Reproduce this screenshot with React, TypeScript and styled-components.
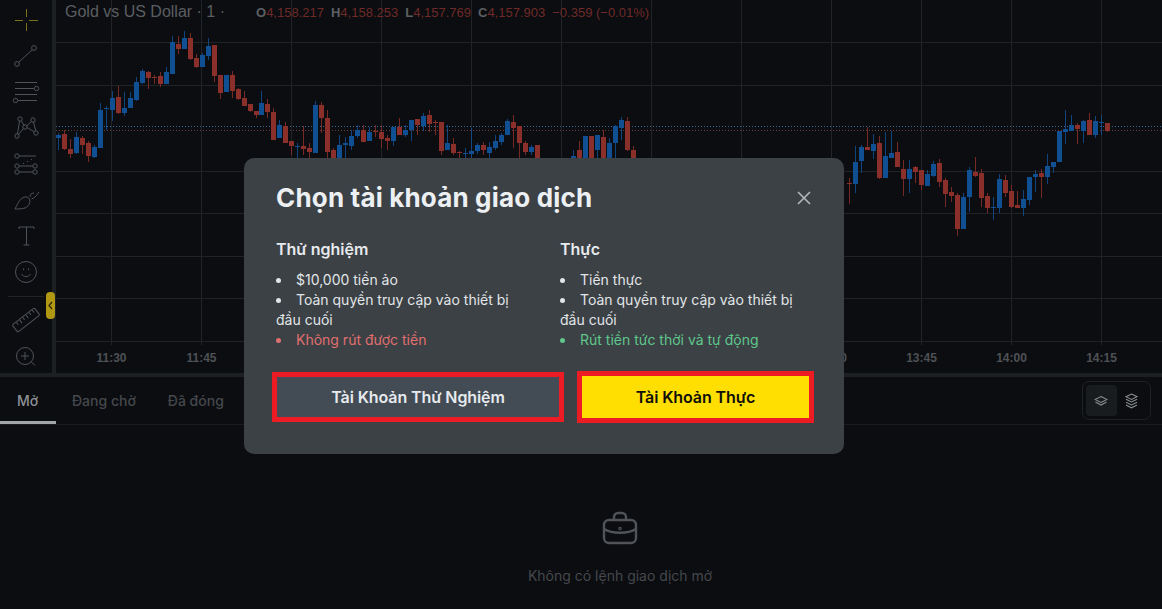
import React from "react";
import styled, { createGlobalStyle } from "styled-components";

const Global = createGlobalStyle`
  html, body { margin: 0; padding: 0; background: #0b0d11; }
  * { box-sizing: border-box; }
`;

const Page = styled.div`
  position: relative;
  width: 1162px;
  height: 609px;
  overflow: hidden;
  display: flex;
  flex-direction: column;
  background: #0b0d11;
  font-family: Inter, "Noto Sans", sans-serif;
`;
const TopRow = styled.div`
  display: flex;
  height: 373px;
  flex: none;
`;
const Toolbar = styled.div`
  position: relative;
  width: 52px;
  flex: none;
  padding-top: 2px;
  display: flex;
  flex-direction: column;
  align-items: center;
`;
const ToolSlot = styled.div<{ $gold?: boolean }>`
  width: 36px;
  height: 36px;
  flex: none;
  svg { display: block; fill: none; stroke: ${(p) => (p.$gold ? "#7e6f1a" : "#4f5357")}; stroke-width: 1; }
`;
const ToolDivider = styled.div`
  width: 36px;
  height: 1px;
  margin: 6px 0 5px;
  background: #202327;
  flex: none;
`;
const CollapsePill = styled.div`
  position: absolute;
  left: 46px;
  top: 292px;
  width: 9px;
  height: 27px;
  border-radius: 4px;
  background: #b19812;
  z-index: 2;
  display: flex;
  align-items: center;
  justify-content: center;
  svg { display: block; }
`;
const VSep = styled.div`
  width: 4px;
  flex: none;
  background: #1d2023;
`;
const ChartArea = styled.div`
  position: relative;
  flex: 1;
  min-width: 0;
  svg { display: block; }
`;
const AxisLabel = styled.text`
  font-family: "Liberation Sans", Arial, sans-serif;
  font-size: 12px;
  font-weight: 700;
  fill: #4e5155;
  text-anchor: middle;
`;
const Legend = styled.div`
  position: absolute;
  left: 9px;
  top: 3px;
  display: flex;
  align-items: center;
  height: 18px;
  font-family: "Liberation Sans", Arial, sans-serif;
  white-space: nowrap;
`;
const LegendTitle = styled.span`
  width: 191px;
  font-size: 16px;
  color: #5b5e61;
`;
const LegendItem = styled.span`
  font-size: 13px;
  color: #6f2a27;
  margin-right: 7px;
  b { color: #5c5f62; font-weight: 700; }
`;
const HSep = styled.div`
  height: 4px;
  flex: none;
  background: #1d2023;
`;
const Panel = styled.div`
  flex: 1;
  display: flex;
  flex-direction: column;
`;
const TabRow = styled.div`
  height: 48px;
  flex: none;
  display: flex;
  align-items: stretch;
  justify-content: space-between;
  padding-right: 11px;
  border-bottom: 1px solid #1a1d20;
`;
const Tabs = styled.div`
  display: flex;
`;
const Tab = styled.div<{ $active?: boolean }>`
  padding: 2px 16px 0 ${(p) => (p.$active ? "17px" : "16px")};
  width: ${(p) => (p.$active ? "56px" : "auto")};
  display: flex;
  align-items: center;
  font-size: 14px;
  font-weight: 500;
  color: ${(p) => (p.$active ? "#8d9196" : "#45484c")};
  border-bottom: 3px solid ${(p) => (p.$active ? "#a3a6a9" : "transparent")};
`;
const Toggle = styled.div`
  align-self: flex-start;
  margin-top: 4px;
  width: 69px;
  height: 39px;
  padding: 3px;
  display: flex;
  border: 1px solid #1e2125;
  border-radius: 7px;
`;
const ToggleCell = styled.div<{ $on?: boolean }>`
  flex: 1;
  display: flex;
  align-items: center;
  justify-content: center;
  border-radius: 4px;
  background: ${(p) => (p.$on ? "#191c1f" : "transparent")};
  svg { display: block; fill: none; stroke: #8a8d90; stroke-width: 1.1; }
`;
const Empty = styled.div`
  flex: 1;
  display: flex;
  flex-direction: column;
  align-items: center;
  padding: 86px 0 0 78px;
  gap: 22px;
  svg { display: block; fill: none; stroke: #505357; stroke-width: 2.4; }
`;
const EmptyText = styled.div`
  font-size: 14px;
  color: #45484c;
`;

const Modal = styled.div`
  position: absolute;
  left: 244px;
  top: 158px;
  width: 600px;
  height: 296px;
  background: #3b4145;
  border-radius: 10px;
  padding: 24px 32px 20px;
  z-index: 5;
  display: flex;
  flex-direction: column;
`;
const ModalHead = styled.div`
  display: flex;
  align-items: center;
  justify-content: space-between;
`;
const Title = styled.h2`
  margin: 0;
  font-size: 26px;
  line-height: 32px;
  font-weight: 700;
  letter-spacing: 0.17px;
  color: #edf0f3;
`;
const Close = styled.div`
  width: 16px;
  height: 16px;
  svg { display: block; stroke: #b1b5b8; stroke-width: 1.7; fill: none; }
`;
const Columns = styled.div`
  display: grid;
  grid-template-columns: 252px 252px;
  column-gap: 32px;
  margin-top: 23px;
`;
const ColHead = styled.h3`
  margin: 0 0 9px;
  font-size: 16px;
  line-height: 24px;
  font-weight: 600;
  color: #e7eaed;
`;
const List = styled.ul`
  margin: 0;
  padding: 0;
  list-style: none;
`;
const Item = styled.li<{ $tone?: "red" | "green" }>`
  font-size: 14px;
  line-height: 20px;
  color: ${(p) => (p.$tone === "red" ? "#e06f70" : p.$tone === "green" ? "#5fc78c" : "#e2e5e8")};
  &::before {
    content: "";
    display: inline-block;
    width: 5px;
    height: 5px;
    border-radius: 50%;
    background: currentColor;
    margin-right: 15px;
    vertical-align: 2px;
  }
`;
const Actions = styled.div`
  display: flex;
  align-items: center;
  gap: 13px;
  margin: 21px -2px 0 -4px;
`;
const ActionBtn = styled.button<{ $primary?: boolean }>`
  flex: none;
  width: ${(p) => (p.$primary ? "237px" : "292px")};
  height: ${(p) => (p.$primary ? "52px" : "50px")};
  border: 5px solid #ed1c24;
  border-radius: 0;
  background: ${(p) => (p.$primary ? "#ffde02" : "#434c54")};
  color: ${(p) => (p.$primary ? "#0f0f0a" : "#e6eaee")};
  font-family: Inter, "Noto Sans", sans-serif;
  font-size: 16px;
  letter-spacing: -0.1px;
  font-weight: 600;
  padding: 0;
`;

type C = [number, number, number, number, number, "b" | "r"];
const candles: C[] = [
  [58,135,138,133,150,"b"],[64,134,149,130,150,"r"],[70,149,154,139,158,"r"],[76,137,153,132,154,"b"],[82,138,145,136,154,"r"],
  [88,143,156,141,162,"r"],[94,147,157,145,158,"b"],[100,110,148,103,148,"b"],[106,108,109,106,130,"b"],[112,98,110,91,121,"b"],
  [118,97,113,86,114,"r"],[124,108,113,92,116,"b"],[130,98,108,92,108,"b"],[136,82,100,77,101,"b"],[142,71,83,69,84,"b"],
  [148,72,78,71,89,"r"],[154,77,78,75,84,"r"],[160,76,84,72,87,"r"],[166,72,84,67,84,"b"],[172,42,74,36,74,"b"],
  [178,44,49,36,54,"r"],[184,38,49,31,49,"b"],[190,38,59,33,60,"r"],[196,58,67,54,68,"r"],[202,55,67,53,67,"b"],
  [208,46,56,38,60,"b"],[214,45,76,45,82,"r"],[220,75,93,75,99,"r"],[226,75,92,75,92,"b"],[232,75,91,71,98,"r"],
  [238,89,99,88,100,"r"],[244,98,106,91,106,"r"],[250,104,111,104,112,"r"],[256,111,115,111,118,"r"],[261,103,115,91,115,"b"],
  [267,104,112,99,118,"r"],[273,112,140,108,140,"r"],[279,125,138,120,138,"b"],[285,126,143,122,143,"r"],[291,141,146,141,155,"r"],
  [297,146,147,143,160,"b"],[303,146,149,126,155,"r"],[309,148,152,143,158,"r"],[315,105,153,101,153,"b"],[321,105,118,102,133,"r"],
  [327,118,152,110,158,"r"],[333,150,158,148,160,"r"],[339,145,158,135,160,"b"],[345,143,145,137,158,"b"],[351,136,146,130,150,"b"],
  [357,130,136,125,138,"b"],[363,130,142,125,142,"r"],[369,132,141,127,141,"b"],[375,131,132,125,137,"r"],[381,132,139,125,148,"r"],
  [387,138,141,135,150,"r"],[393,127,141,127,146,"b"],[399,127,135,118,135,"r"],[405,130,135,125,137,"b"],[411,120,130,120,141,"b"],
  [417,119,125,119,135,"r"],[423,116,126,113,131,"b"],[429,115,124,110,132,"r"],[435,122,123,120,135,"r"],[441,122,151,122,155,"r"],
  [447,143,150,125,150,"b"],[453,144,153,138,155,"r"],[459,152,153,151,158,"r"],[465,153,154,148,158,"b"],[471,151,154,128,158,"b"],
  [477,145,151,143,154,"b"],[483,145,150,142,155,"r"],[489,147,153,142,158,"b"],[495,141,148,135,150,"b"],[501,135,142,133,145,"b"],
  [507,121,135,119,135,"b"],[513,122,128,115,148,"r"],[519,126,143,126,158,"r"],[525,143,152,141,155,"r"],[531,147,152,145,155,"b"],
  [537,145,158,145,160,"r"],[573,156,160,150,160,"b"],[579,150,160,141,160,"r"],[585,136,160,136,160,"b"],[591,136,160,136,160,"r"],
  [597,135,150,135,160,"b"],[603,137,160,130,160,"r"],[609,143,160,138,160,"b"],[615,126,143,125,160,"b"],[621,120,128,117,140,"b"],
  [627,121,150,117,151,"r"],[633,150,160,146,160,"r"],
  [849,183,184,178,204,"r"],[855,162,184,146,193,"b"],[861,147,161,145,173,"b"],[867,147,150,127,150,"r"],[873,144,151,134,159,"b"],
  [879,143,178,136,179,"r"],[885,156,178,132,178,"b"],[891,153,158,131,158,"b"],[897,152,167,142,167,"r"],[903,169,179,160,196,"r"],
  [909,169,179,160,193,"b"],[915,167,172,166,183,"r"],[921,170,185,170,190,"r"],[927,174,186,170,186,"b"],[933,164,176,161,177,"b"],
  [939,163,182,159,187,"r"],[945,180,194,178,207,"r"],[951,192,196,187,202,"r"],[957,195,229,193,236,"r"],[963,197,229,193,229,"b"],
  [969,170,197,167,212,"b"],[975,172,176,157,177,"r"],[981,173,198,169,207,"r"],[987,196,208,193,213,"r"],[993,207,208,197,220,"b"],
  [999,179,208,174,213,"b"],[1005,180,193,175,197,"r"],[1011,191,207,185,208,"r"],[1017,205,208,191,208,"r"],[1023,199,208,190,216,"b"],
  [1029,177,200,177,205,"b"],[1035,174,177,170,192,"b"],[1041,173,177,169,198,"r"],[1047,166,177,154,184,"b"],[1053,162,167,162,173,"b"],
  [1059,131,162,131,162,"b"],[1065,129,132,110,144,"b"],[1071,125,131,115,131,"b"],[1077,125,129,123,144,"r"],[1083,121,131,120,143,"b"],
  [1089,120,135,113,135,"r"],[1095,121,135,116,138,"b"],[1101,122,123,115,135,"b"],[1107,123,131,123,132,"r"],
];
const vGrid = [111, 201, 291, 381, 471, 561, 651, 741, 831, 921, 1011, 1101];
const hGrid = [42, 85, 171, 213, 256, 298, 341];
const times = ["11:30","11:45","12:00","12:15","12:30","12:45","13:00","13:15","13:30","13:45","14:00","14:15"];

const Chart = () => (
  <svg width="1106" height="373" viewBox="56 0 1106 373">
    <g shapeRendering="crispEdges">
      {hGrid.map((y) => <rect key={y} x="56" y={y} width="1106" height="1" fill="#212427" />)}
      {vGrid.map((x) => <rect key={x} x={x} y="0" width="1" height="345" fill="#212427" />)}
      <line x1="56" x2="1162" y1="126.5" y2="126.5" stroke="#33689c" strokeDasharray="1 2" />
      <line x1="56" x2="1162" y1="130.5" y2="130.5" stroke="#6d3b36" strokeDasharray="1 2" />
      {candles.map(([x, t, b, h, l, c]) => {
        const col = c === "b" ? "#104f92" : "#8a2f29";
        return (
          <g key={x} fill={col}>
            <rect x={x} y={h} width="1" height={l - h} opacity="0.85" />
            <rect x={x - 2} y={t} width="5" height={Math.max(b - t, 1)} />
          </g>
        );
      })}
    </g>
    {times.map((t, i) => <AxisLabel key={t} x={vGrid[i] + 0.5} y="362">{t}</AxisLabel>)}
  </svg>
);

const Ico = ({ children, gold }: { children: React.ReactNode; gold?: boolean }) => (
  <ToolSlot $gold={gold}><svg width="36" height="36" viewBox="0 0 36 36">{children}</svg></ToolSlot>
);

export default function App() {
  return (
    <Page>
      <Global />
      <TopRow>
        <Toolbar>
          <Ico gold><path d="M7 18.5h8M21 18.5h9M18.5 7v8M18.5 21v8" /></Ico>
          <Ico>
            <circle cx="26" cy="10" r="2.4" /><circle cx="9" cy="26" r="2.4" /><path d="M24.3 11.7 10.7 24.3" />
          </Ico>
          <Ico>
            <path d="M7 8.5h22M7 14.5h19M7 20.5h22M10 26.5h19" /><circle cx="28.5" cy="14.5" r="2.2" /><circle cx="7.5" cy="26.5" r="2.2" />
          </Ico>
          <Ico>
            <circle cx="12" cy="9" r="2.2" /><circle cx="25" cy="10" r="2.2" /><circle cx="17" cy="17" r="2.2" /><circle cx="9" cy="26" r="2.2" /><circle cx="28" cy="23" r="2.2" />
            <path d="M11.5 11 9.5 24M13.5 11l2.5 4.5M23.5 11.5l-5 4.5M25.5 12l2.3 9M19 17.5l7.3 4.3M15.5 18.5 10.5 24.5" />
          </Ico>
          <Ico>
            <circle cx="9" cy="10" r="2.2" /><path d="M11 10h17" /><circle cx="9" cy="20" r="2.2" /><circle cx="27" cy="20" r="2.2" /><path d="M11 20h14" /><circle cx="9" cy="26" r="2.2" /><circle cx="27" cy="26" r="2.2" /><path d="M11 26h14" />
            <path d="M15 17.5h1M19 15.5h1M23 13.5h1" />
          </Ico>
          <Ico>
            <path d="M7 27C10 21 13 14 19 15C24 17 22 24 17 26C14 27 10 27 7 27Z" /><path d="M22 15C22 12 24 11 26 11" /><path d="M23.5 17C27 16 29 13 31 10" />
          </Ico>
          <Ico>
            <path d="M11 11V9h15v2M18.5 9v18M15.5 27h6" />
          </Ico>
          <Ico>
            <circle cx="18" cy="18" r="10.5" /><path d="M15.5 14.5v1.6M20.5 14.5v1.6M13.5 20c2.4 3.6 6.6 3.6 9 0" />
          </Ico>
          <ToolDivider />
          <Ico>
            <g transform="rotate(-38 18 18)">
              <rect x="4" y="13.5" width="28" height="9" rx="1" />
              <path d="M9 14v3M13 14v4M17 14v3M21 14v4M25 14v3M29 14v3" />
            </g>
          </Ico>
          <Ico>
            <circle cx="17" cy="18" r="8.5" /><path d="M17 14v8M13 18h8M23.5 24l3.5 3.5" />
          </Ico>
          <CollapsePill>
            <svg width="5" height="9" viewBox="0 0 5 9" fill="none" stroke="#2c2606" strokeWidth="1.2"><path d="M4 1 1 4.5 4 8" /></svg>
          </CollapsePill>
        </Toolbar>
        <VSep />
        <ChartArea>
          <Chart />
          <Legend>
            <LegendTitle>Gold vs US Dollar · 1 ·</LegendTitle>
            <LegendItem><b>O</b>4,158.217</LegendItem>
            <LegendItem><b>H</b>4,158.253</LegendItem>
            <LegendItem><b>L</b>4,157.769</LegendItem>
            <LegendItem><b>C</b>4,157.903</LegendItem>
            <LegendItem>−0.359 (−0.01%)</LegendItem>
          </Legend>
        </ChartArea>
      </TopRow>
      <HSep />
      <Panel>
        <TabRow>
          <Tabs>
            <Tab $active>Mở</Tab>
            <Tab>Đang chờ</Tab>
            <Tab>Đã đóng</Tab>
          </Tabs>
          <Toggle>
            <ToggleCell $on>
              <svg width="14" height="12" viewBox="0 0 14 12"><path d="M7 1.5 13 4.5 7 7.5 1 4.5Z" /><path d="M1.5 7 7 10l5.5-3" /></svg>
            </ToggleCell>
            <ToggleCell>
              <svg width="13" height="16" viewBox="0 0 13 16"><path d="M6.5 1 12 3.7 6.5 6.4 1 3.7Z" /><path d="M1 6.3 6.5 9 12 6.3M1 9.2l5.5 2.7L12 9.2M1 12.1l5.5 2.7 5.5-2.7" /></svg>
            </ToggleCell>
          </Toggle>
        </TabRow>
        <Empty>
          <svg width="36" height="34" viewBox="0 0 36 34">
            <path d="M12 9V6a4 4 0 0 1 4-4h4a4 4 0 0 1 4 4v3" />
            <rect x="2" y="9" width="32" height="23" rx="5" />
            <path d="M2 18c8 5 24 5 32 0" />
            <circle cx="18" cy="17.5" r="0.6" />
          </svg>
          <EmptyText>Không có lệnh giao dịch mở</EmptyText>
        </Empty>
      </Panel>
      <Modal>
        <ModalHead>
          <Title>Chọn tài khoản giao dịch</Title>
          <Close>
            <svg width="16" height="16" viewBox="0 0 16 16"><path d="M2 2l12 12M14 2 2 14" /></svg>
          </Close>
        </ModalHead>
        <Columns>
          <div>
            <ColHead>Thử nghiệm</ColHead>
            <List>
              <Item>$10,000 tiền ảo</Item>
              <Item>Toàn quyền truy cập vào thiết bị đầu cuối</Item>
              <Item $tone="red">Không rút được tiền</Item>
            </List>
          </div>
          <div>
            <ColHead>Thực</ColHead>
            <List>
              <Item>Tiền thực</Item>
              <Item>Toàn quyền truy cập vào thiết bị đầu cuối</Item>
              <Item $tone="green">Rút tiền tức thời và tự động</Item>
            </List>
          </div>
        </Columns>
        <Actions>
          <ActionBtn>Tài Khoản Thử Nghiệm</ActionBtn>
          <ActionBtn $primary>Tài Khoản Thực</ActionBtn>
        </Actions>
      </Modal>
    </Page>
  );
}
